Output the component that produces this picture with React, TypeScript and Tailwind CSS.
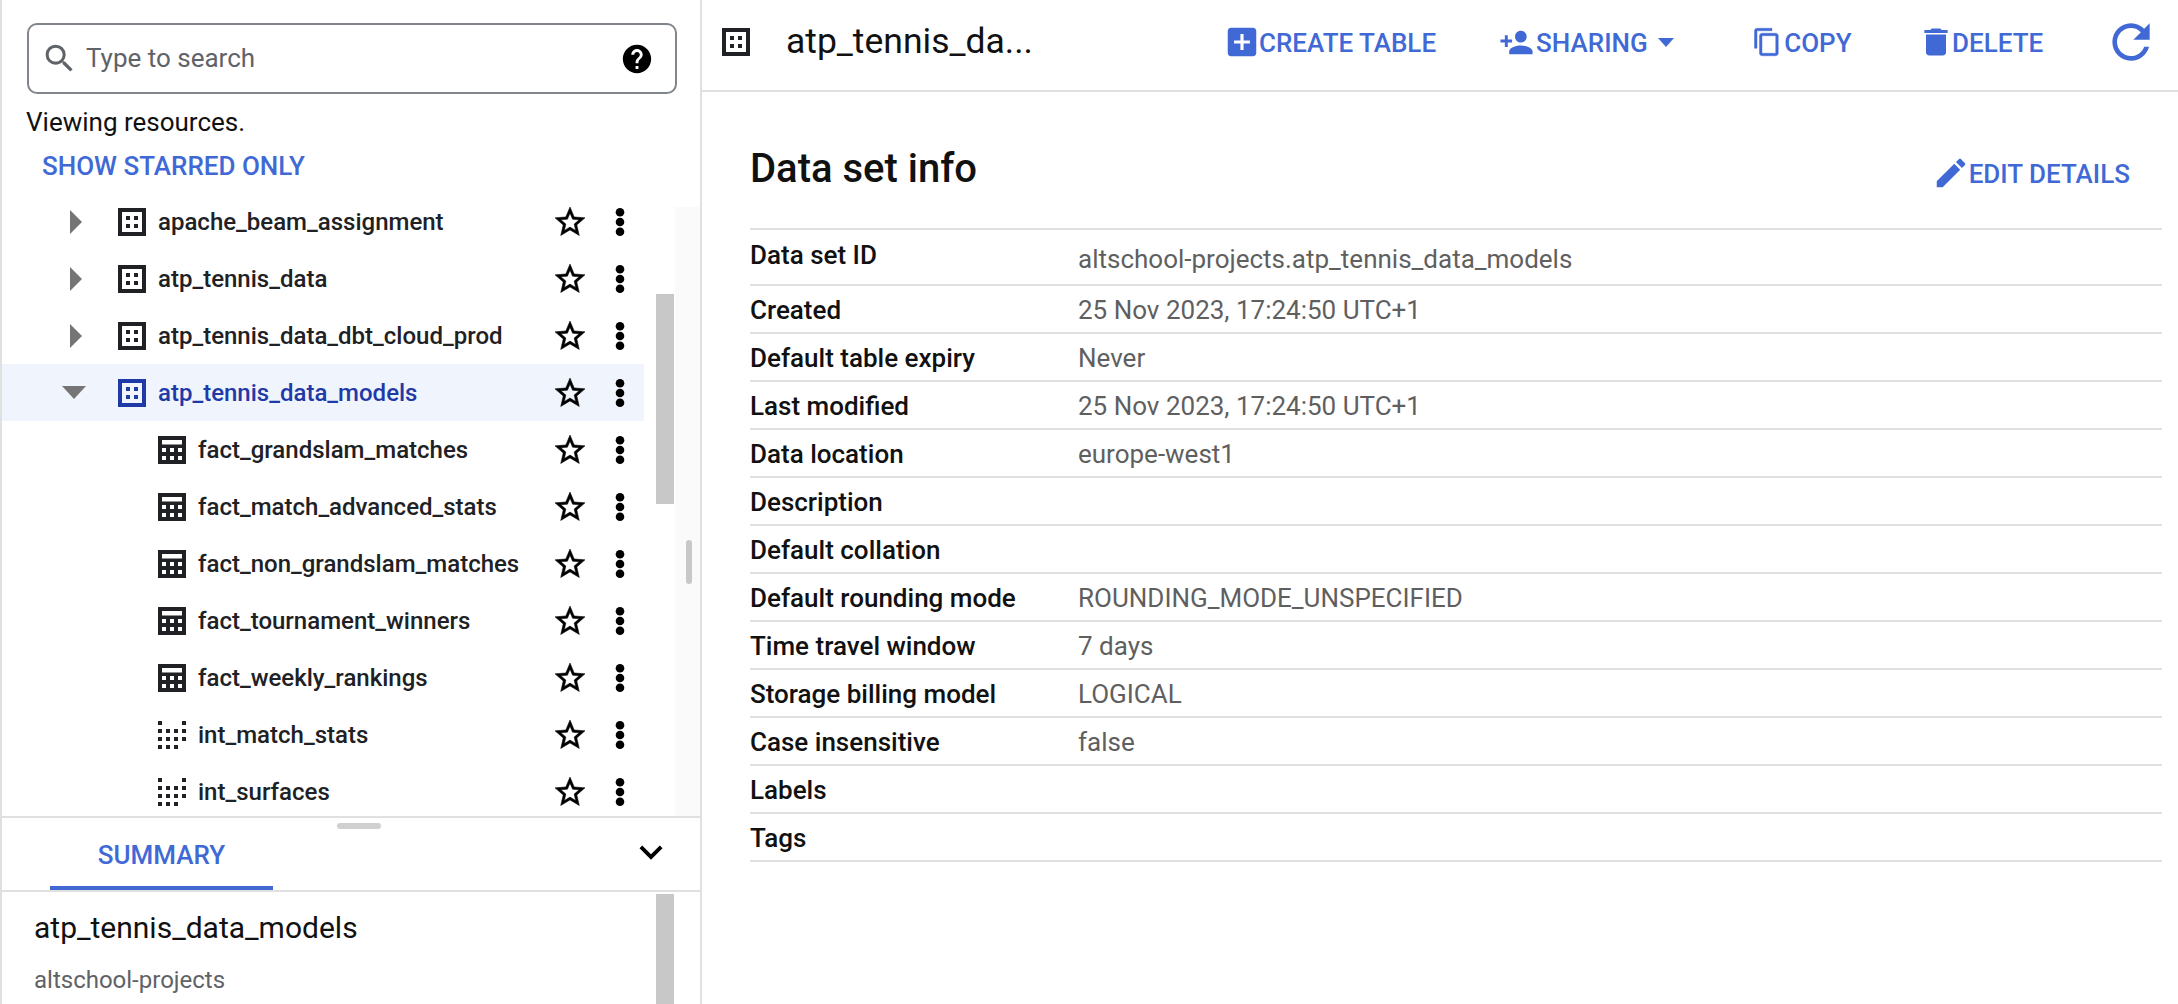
import type { ReactNode } from 'react';

const P = {
  search: 'M15.5 14h-.79l-.28-.27A6.471 6.471 0 0 0 16 9.5 6.5 6.5 0 1 0 9.5 16c1.61 0 3.09-.59 4.23-1.57l.27.28v.79l5 4.99L20.49 19l-4.99-5zm-6 0C7.01 14 5 11.99 5 9.5S7.01 5 9.5 5 14 7.01 14 9.5 11.99 14 9.5 14z',
  help: 'M12 2C6.48 2 2 6.48 2 12s4.48 10 10 10 10-4.48 10-10S17.52 2 12 2zm1 17h-2v-2h2v2zm2.07-7.75l-.9.92C13.45 12.9 13 13.5 13 15h-2v-.5c0-1.1.45-2.1 1.17-2.83l1.24-1.26c.37-.36.59-.86.59-1.41 0-1.1-.9-2-2-2s-2 .9-2 2H8c0-2.21 1.79-4 4-4s4 1.79 4 4c0 .88-.36 1.68-.93 2.25z',
  star: 'M22 9.24l-7.19-.62L12 2 9.19 8.63 2 9.24l5.46 4.73L5.82 21 12 17.27 18.18 21l-1.63-7.03L22 9.24zM12 15.4l-3.76 2.27 1-4.28-3.32-2.88 4.38-.38L12 6.1l1.71 4.04 4.38.38-3.32 2.88 1 4.28L12 15.4z',
  person: 'M15 12c2.21 0 4-1.79 4-4s-1.79-4-4-4-4 1.79-4 4 1.79 4 4 4zm-9-2V7H4v3H1v2h3v3h2v-3h3v-2H6zm9 4c-2.67 0-8 1.34-8 4v2h16v-2c0-2.66-5.33-4-8-4z',
  copy: 'M16 1H4c-1.1 0-2 .9-2 2v14h2V3h12V1zm3 4H8c-1.1 0-2 .9-2 2v14c0 1.1.9 2 2 2h11c1.1 0 2-.9 2-2V7c0-1.1-.9-2-2-2zm0 16H8V7h11v14z',
  del: 'M6 19c0 1.1.9 2 2 2h8c1.1 0 2-.9 2-2V7H6v12zM19 4h-3.5l-1-1h-5l-1 1H5v2h14V4z',
  refresh: 'M17.65 6.35C16.2 4.9 14.21 4 12 4c-4.42 0-7.99 3.58-7.99 8s3.57 8 7.99 8c3.73 0 6.84-2.55 7.73-6h-2.08c-.82 2.33-3.04 4-5.65 4-3.31 0-6-2.69-6-6s2.69-6 6-6c1.66 0 3.14.69 4.22 1.78L13 11h7V4l-2.35 2.35z',
  edit: 'M3 17.25V21h3.75L17.81 9.94l-3.75-3.75L3 17.25zM20.71 7.04c.39-.39.39-1.02 0-1.41l-2.34-2.34c-.39-.39-1.02-.39-1.41 0l-1.83 1.83 3.75 3.75 1.83-1.83z',
  add: 'M19 3H5c-1.11 0-2 .9-2 2v14c0 1.1.89 2 2 2h14c1.1 0 2-.9 2-2V5c0-1.1-.9-2-2-2zm-2 10h-4v4h-2v-4H7v-2h4V7h2v4h4v2z',
  down: 'M7.41 8.59L12 13.17l4.59-4.58L18 10l-6 6-6-6z',
};

function Icon({ d, className, heavy, stretch }: { d: string; className?: string; heavy?: boolean; stretch?: boolean }) {
  return (
    <svg
      viewBox="0 0 24 24"
      fill="currentColor"
      stroke={heavy ? 'currentColor' : 'none'}
      strokeWidth={heavy ? 0.35 : 0}
      preserveAspectRatio={stretch ? 'none' : undefined}
      className={className}
    >
      <path d={d} />
    </svg>
  );
}

function DatasetIcon({ className }: { className?: string }) {
  return (
    <svg viewBox="0 0 28 28" fill="currentColor" className={className}>
      <path fillRule="evenodd" d="M0 0h28v28H0zM4 4v20h20V4z" />
      <rect x="8" y="8" width="4" height="4" />
      <rect x="16" y="8" width="4" height="4" />
      <rect x="8" y="16" width="4" height="4" />
      <rect x="16" y="16" width="4" height="4" />
    </svg>
  );
}

function TableIcon({ className }: { className?: string }) {
  return (
    <svg viewBox="0 0 28 28" fill="#202124" className={className}>
      <path
        fillRule="evenodd"
        d="M0 0h28v28H0zM4 4v4.500h20V4zM4 12v4h4v-4zM12 12v4h4v-4zM20 12v4h4v-4zM4 20v4h4v-4zM12 20v4h4v-4zM20 20v4h4v-4z"
      />
    </svg>
  );
}

function ViewIcon({ className }: { className?: string }) {
  const cells = [
    [0, 0], [24, 0],
    [0, 8], [8, 8], [16, 8], [24, 8],
    [0, 16], [8, 16], [16, 16], [24, 16],
    [0, 24], [8, 24], [16, 24],
  ];
  return (
    <svg viewBox="0 0 28 28" fill="#202124" className={className}>
      {cells.map(([x, y]) => (
        <rect key={`${x}-${y}`} x={x} y={y} width="4" height="4" />
      ))}
    </svg>
  );
}

function RowActions() {
  return (
    <div className="ml-auto flex items-center text-black">
      <Icon d={P.star} heavy className="h-[36px] w-[36px]" />
      <svg viewBox="0 0 10 28" fill="currentColor" className="ml-[27px] mr-[19px] h-[28px] w-[10px]">
        <circle cx="5" cy="4.300" r="4.300" />
        <circle cx="5" cy="14" r="4.300" />
        <circle cx="5" cy="23.700" r="4.300" />
      </svg>
    </div>
  );
}

function DatasetRow({ name, open }: { name: string; open?: boolean }) {
  return (
    <div className={`flex h-[57px] items-center ${open ? 'bg-[#f0f4fd] text-[#1f3aa6]' : 'text-[#202124]'}`}>
      <div className="w-[116px] shrink-0">
        {open ? (
          <div className="ml-[60px] h-0 w-0 border-x-[12px] border-t-[13px] border-x-transparent border-t-[#757575]" />
        ) : (
          <div className="ml-[68px] h-0 w-0 border-y-[12px] border-l-[12px] border-y-transparent border-l-[#757575]" />
        )}
      </div>
      <DatasetIcon className="h-[28px] w-[28px] shrink-0" />
      <span className="ml-[12px] text-[24px] font-medium">{name}</span>
      <RowActions />
    </div>
  );
}

function ChildRow({ name, view }: { name: string; view?: boolean }) {
  return (
    <div className="flex h-[57px] items-center pl-[156px] text-[#202124]">
      {view ? <ViewIcon className="h-[28px] w-[28px] shrink-0" /> : <TableIcon className="h-[28px] w-[28px] shrink-0" />}
      <span className="ml-[12px] text-[24px] font-medium">{name}</span>
      <RowActions />
    </div>
  );
}

function Action({ icon, label, className, extra }: { icon: ReactNode; label: string; className?: string; extra?: ReactNode }) {
  return (
    <div className={`flex shrink-0 items-center text-[#4169d6] ${className ?? ''}`}>
      {icon}
      <span className="mt-[2px] text-[26px] font-medium">{label}</span>
      {extra}
    </div>
  );
}

const info: [string, string][] = [
  ['Created', '25 Nov 2023, 17:24:50 UTC+1'],
  ['Default table expiry', 'Never'],
  ['Last modified', '25 Nov 2023, 17:24:50 UTC+1'],
  ['Data location', 'europe-west1'],
  ['Description', ''],
  ['Default collation', ''],
  ['Default rounding mode', 'ROUNDING_MODE_UNSPECIFIED'],
  ['Time travel window', '7 days'],
  ['Storage billing model', 'LOGICAL'],
  ['Case insensitive', 'false'],
  ['Labels', ''],
  ['Tags', ''],
];

export default function App() {
  return (
    <div className="flex h-screen w-full overflow-hidden bg-white font-['Roboto',sans-serif] text-[#202124]">
      <aside className="flex w-[702px] shrink-0 flex-col border-x-2 border-[#e0e0e0]">
        <div className="pl-[25px] pr-[23px] pt-[23px]">
          <div className="flex h-[71px] items-center rounded-[10px] border-2 border-[#80868b] pl-[12px] pr-[21px]">
            <Icon d={P.search} className="h-[37px] w-[37px] text-[#5f6368]" />
            <span className="ml-[8px] text-[26px] text-[#5f6368]">Type to search</span>
            <Icon d={P.help} className="ml-auto h-[34px] w-[34px] text-black" />
          </div>
          <div className="ml-[-1px] mt-[13px] text-[26px] leading-[30px] text-[#111111]">Viewing resources.</div>
          <div className="ml-[15px] mt-[14px] text-[26px] font-medium leading-[30px] text-[#4169d6]">SHOW STARRED ONLY</div>
        </div>

        <div className="mt-[12px] flex min-h-0 flex-1">
          <div className="w-[642px] shrink-0 overflow-hidden">
            <DatasetRow name="apache_beam_assignment" />
            <DatasetRow name="atp_tennis_data" />
            <DatasetRow name="atp_tennis_data_dbt_cloud_prod" />
            <DatasetRow name="atp_tennis_data_models" open />
            <ChildRow name="fact_grandslam_matches" />
            <ChildRow name="fact_match_advanced_stats" />
            <ChildRow name="fact_non_grandslam_matches" />
            <ChildRow name="fact_tournament_winners" />
            <ChildRow name="fact_weekly_rankings" />
            <ChildRow name="int_match_stats" view />
            <ChildRow name="int_surfaces" view />
          </div>
          <div className="ml-[12px] w-[18px] shrink-0 pt-[101px]">
            <div className="h-[210px] bg-[#c8c8c8]" />
          </div>
          <div className="ml-[1px] mt-[14px] flex-1 bg-[#fafafa] pl-[11px] pt-[333px]">
            <div className="h-[44px] w-[6px] rounded-full bg-[#c8c8c8]" />
          </div>
        </div>

        <div className="relative h-[76px] shrink-0 border-y-2 border-[#e0e0e0]">
          <div className="absolute left-[335px] top-[5px] h-[6px] w-[44px] rounded-full bg-[#d0d0d0]" />
          <div className="flex h-full items-center pl-[48px]">
            <div className="flex h-full w-[223px] items-center justify-center border-b-4 border-[#4169d6] pt-[6px] text-[26px] font-medium text-[#4169d6]">
              SUMMARY
            </div>
            <Icon d={P.down} className="ml-[355px] mt-[-4px] h-[46px] w-[46px] text-black" />
          </div>
        </div>

        <div className="flex h-[112px] shrink-0">
          <div className="w-[642px] shrink-0 pl-[32px] pt-[16px]">
            <div className="text-[30px] leading-[40px] text-[#111111]">atp_tennis_data_models</div>
            <div className="mt-[18px] text-[24px] leading-[28px] text-[#5f6368]">altschool-projects</div>
          </div>
          <div className="ml-[12px] mt-[2px] w-[18px] bg-[#c8c8c8]" />
        </div>
      </aside>

      <main className="flex min-w-0 flex-1 flex-col">
        <header className="flex h-[92px] shrink-0 items-center border-b-2 border-[#e0e0e0] pb-[6px] pl-[20px]">
          <DatasetIcon className="h-[28px] w-[28px] shrink-0" />
          <span className="ml-[36px] w-[247px] shrink-0 text-[35.5px] text-[#111111]">atp_tennis_da...</span>
          <Action
            className="ml-[190px]"
            label="CREATE TABLE"
            icon={<Icon d={P.add} className="mr-[-2px] h-[38px] w-[38px]" />}
          />
          <Action
            className="ml-[63px]"
            label="SHARING"
            icon={<Icon d={P.person} className="mr-[2px] h-[35px] w-[35px]" />}
            extra={<div className="ml-[10px] h-0 w-0 border-x-[8px] border-t-[9px] border-x-transparent border-t-[#4169d6]" />}
          />
          <Action
            className="ml-[78px]"
            label="COPY"
            icon={<Icon d={P.copy} heavy className="mr-[2.5px] h-[30px] w-[30px]" />}
          />
          <Action
            className="ml-[64px]"
            label="DELETE"
            icon={<Icon d={P.del} stretch className="mr-[-3.5px] h-[36px] w-[40px]" />}
          />
          <Icon d={P.refresh} className="ml-[60px] h-[56px] w-[56px] shrink-0 text-[#4169d6]" />
        </header>

        <section className="pl-[48px] pr-[16px]">
          <div className="flex h-[136px] items-center">
            <h1 className="mt-[18px] text-[40px] font-medium text-[#111111]">Data set info</h1>
            <Action
              className="ml-auto mr-[32px] mt-[26px]"
              label="EDIT DETAILS"
              icon={<Icon d={P.edit} className="mr-[-1px] h-[38px] w-[38px]" />}
            />
          </div>
          <div className="border-y-2 border-[#e0e0e0]">
            <div className="flex h-[54px] items-start">
              <span className="w-[328px] pt-[10px] text-[26px] font-medium leading-[30px] text-[#111111]">Data set ID</span>
              <span className="pt-[14px] text-[26px] leading-[30px] text-[#5f5f5f]">altschool-projects.atp_tennis_data_models</span>
            </div>
          </div>
          {info.map(([label, value]) => (
            <div key={label} className="flex h-[48px] items-center border-b-2 border-[#e0e0e0] pt-[2px]">
              <span className="w-[328px] text-[26px] font-medium text-[#111111]">{label}</span>
              <span className="text-[26px] text-[#5f5f5f]">{value}</span>
            </div>
          ))}
        </section>
      </main>
    </div>
  );
}
